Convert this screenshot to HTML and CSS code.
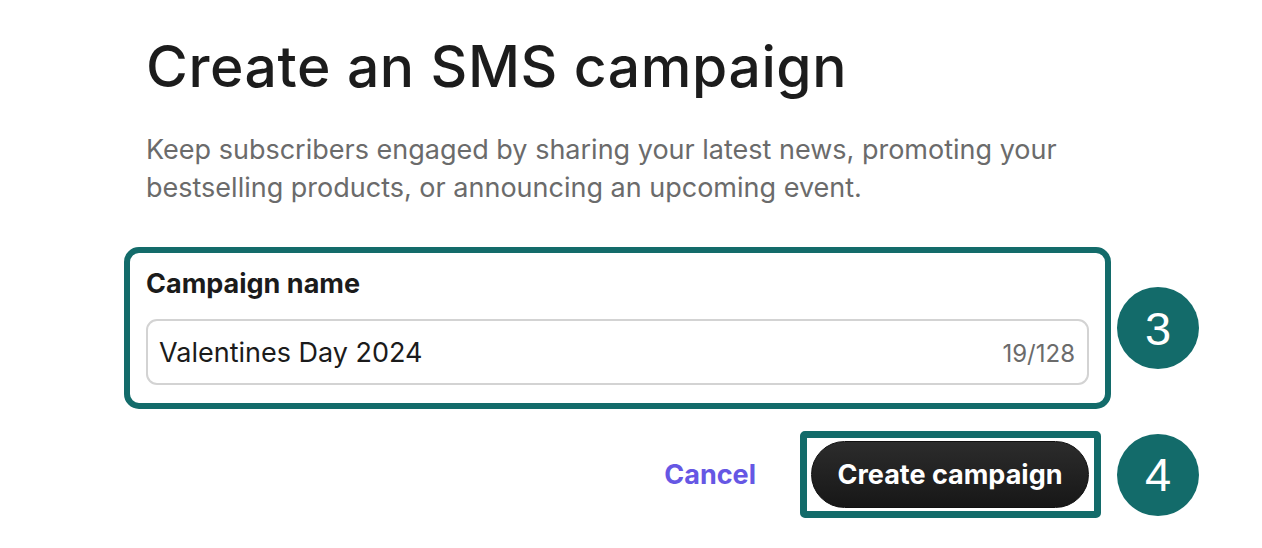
FILE: index.html
```html
<!DOCTYPE html>
<html lang="en">
<head>
<meta charset="utf-8">
<title>Create an SMS campaign</title>
<link rel="stylesheet" href="styles.css">
</head>
<body>
<main class="page">
  <header class="intro">
    <h1 class="title">Create an SMS campaign</h1>
    <p class="lead">Keep subscribers engaged by sharing your latest news, promoting your bestselling products, or announcing an upcoming event.</p>
  </header>
  <div class="grid">
    <section class="field-box">
      <label class="label" for="name">Campaign name</label>
      <div class="input">
        <span class="input-text" id="name">Valentines Day 2024</span>
        <span class="counter">19/128</span>
      </div>
    </section>
    <div class="badge">3</div>
    <div class="actions">
      <a class="cancel" href="#">Cancel</a>
      <div class="outline">
        <button class="primary" type="button">Create campaign</button>
      </div>
    </div>
    <div class="badge">4</div>
  </div>
</main>
</body>
</html>
```

FILE: styles.css
```css
* { box-sizing: border-box; }
html, body { margin: 0; padding: 0; background: #ffffff; }
body { font-family: Inter, "Noto Sans", sans-serif; color: #1b1b1b; }

.page {
  width: 1262px;
  height: 548px;
  padding: 34px 0 0 124px;
  overflow: hidden;
}

.intro { padding-left: 22px; width: 987px; }

.title {
  margin: 0;
  font-family: Inter, "Liberation Sans", sans-serif;
  font-weight: 500;
  font-size: 57px;
  line-height: 66px;
  letter-spacing: 0.6px;
  color: #1c1c1c;
}

.lead {
  margin: 31px 0 0 0;
  width: 943px;
  font-size: 27px;
  line-height: 38px;
  color: #6b6b6b;
}

.grid {
  margin-top: 40px;
  display: grid;
  grid-template-columns: 987px 82px;
  column-gap: 6px;
  row-gap: 22px;
  align-items: center;
}

.field-box {
  border: 6px solid #136b6a;
  border-radius: 15px;
  padding: 15px 16px 18px 16px;
  display: flex;
  flex-direction: column;
  gap: 19px;
}

.label {
  font-size: 27px;
  line-height: 32px;
  font-weight: 700;
  color: #1b1b1b;
}

.input {
  height: 66px;
  border: 2px solid #d3d3d3;
  border-radius: 11px;
  padding: 0 12px 0 11px;
  display: flex;
  align-items: center;
  justify-content: space-between;
}

.input-text {
  font-size: 27px;
  color: #1b1b1b;
  padding-top: 1px;
}

.counter {
  font-size: 24px;
  color: #6b6b6b;
  padding-top: 2px;
}

.badge {
  width: 82px;
  height: 82px;
  border-radius: 50%;
  background: #136b6a;
  color: #ffffff;
  display: flex;
  align-items: center;
  justify-content: center;
  font-family: "Liberation Sans", Arial, sans-serif;
  font-size: 47px;
  line-height: 1;
}

.actions {
  display: flex;
  justify-content: flex-end;
  align-items: center;
  gap: 44px;
  padding-right: 10px;
}

.cancel {
  font-size: 27px;
  font-weight: 700;
  color: #6657e4;
  text-decoration: none;
}

.outline {
  border: 7px solid #136b6a;
  border-radius: 5px;
  padding: 3px 5px 3px 4px;
  display: flex;
}

.primary {
  height: 67px;
  width: 278px;
  border: 1px solid #111;
  border-radius: 34px;
  background: linear-gradient(#2c2c2c, #171717);
  color: #ffffff;
  font-family: Inter, "Noto Sans", sans-serif;
  font-size: 27px;
  font-weight: 700;
  padding: 0;
  cursor: pointer;
}
```
